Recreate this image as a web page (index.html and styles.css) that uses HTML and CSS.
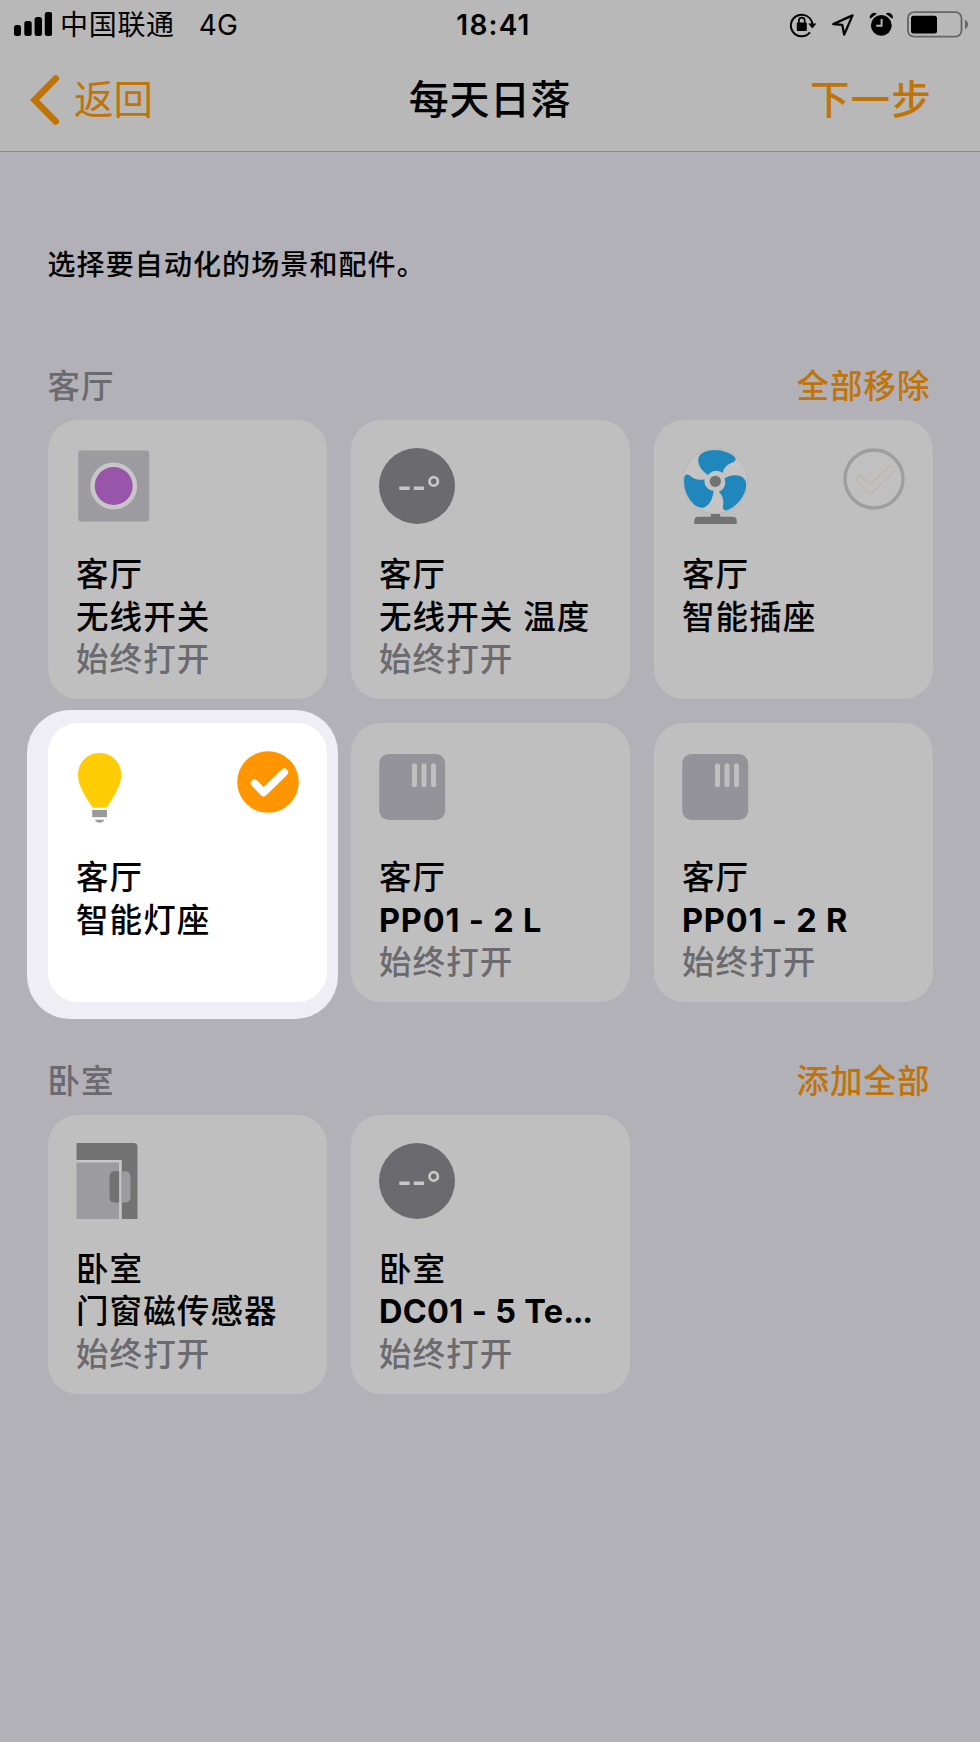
FILE: index.html
```html
<!DOCTYPE html>
<html lang="zh-CN">
<head>
    <meta charset="UTF-8">
    <title>每天日落</title>
    <link rel="stylesheet" href="styles.css">
</head>
<body>
    <!-- shared icons -->
    <svg class="defs" width="0" height="0">
        <symbol id="thermo" viewBox="0 0 76 76">
            <circle cx="38" cy="38" r="38" fill="#89888d"/>
            <path d="M20.3 40.3h10.3M34.8 40.3h10.3" stroke="#fff" stroke-width="3.6"/>
            <circle cx="54.7" cy="33.4" r="4.2" fill="none" stroke="#fff" stroke-width="2.8"/>
        </symbol>
        <symbol id="switch" viewBox="0 0 76 76">
            <rect x=".2" y="3" width="66" height="66" rx="9.5" fill="#bebdc4"/>
            <path d="M35.5 14.8v19M45 14.8v19M54.5 14.8v19" stroke="#f5f5f5" stroke-width="5" stroke-linecap="round"/>
        </symbol>
    </svg>

    <header>
        <div class="status">
            <div class="carrier">
                <svg width="38" height="24" viewBox="0 0 38 24">
                    <rect x="0" y="13" width="7" height="11" rx="2.5"/>
                    <rect x="10.3" y="9" width="7.4" height="15" rx="2.5"/>
                    <rect x="20.6" y="5" width="7.4" height="19" rx="2.5"/>
                    <rect x="30.8" y="0" width="7.4" height="24" rx="2.5"/>
                </svg>
                <span class="operator">中国联通</span>
                <span class="network">4G</span>
            </div>
            <div class="time">18:41</div>
            <svg class="status-icons" width="182" height="32" viewBox="0 0 182 32">
                <!-- rotation lock -->
                <path d="M22 23.4a10.8 10.8 0 1 1 2.4-8.2" fill="none" stroke="#000" stroke-width="2"/>
                <path d="M20.2 14.6h8.2l-4.1 5z"/>
                <rect x="8.8" y="13.6" width="10" height="8.4" rx="1"/>
                <path d="M10.9 14v-2.4a2.9 2.9 0 0 1 5.8 0V14" fill="none" stroke="#000" stroke-width="1.7"/>
                <!-- location -->
                <path d="M45.3 15.1L64.5 6.4l-8.3 19.2-2-9.8z" fill="none" stroke="#000" stroke-width="2.3" stroke-linejoin="round"/>
                <!-- alarm -->
                <circle cx="93.3" cy="16.4" r="10.4"/>
                <path d="M82.4 8.6a4 4 0 0 1 5.3-3.9zM104.2 8.6a4 4 0 0 0-5.3-3.9z" stroke="#000" stroke-width="1.5" stroke-linejoin="round"/>
                <path d="M93.6 10v6.8h-5.4" fill="none" stroke="#ececec" stroke-width="1.9"/>
                <!-- battery -->
                <rect x="119.9" y="3.2" width="53.6" height="24.4" rx="6" fill="none" stroke="#828282" stroke-width="1.8"/>
                <rect x="123" y="6.8" width="26" height="17.6" rx="2.5"/>
                <path d="M177 10.8c4 1.8 4 7.6 0 9.4z" fill="#828282"/>
            </svg>
        </div>
        <nav>
            <a class="back">
                <svg width="30" height="50" viewBox="0 0 30 50"><path d="M25.8 3.5L4.6 25l21.2 21.5" fill="none" stroke="currentColor" stroke-width="6.6" stroke-linecap="round" stroke-linejoin="miter"/></svg>
                <span>返回</span>
            </a>
            <h1>每天日落</h1>
            <a class="next">下一步</a>
        </nav>
    </header>

    <main>
        <p class="hint">选择要自动化的场景和配件。</p>

        <section>
            <div class="room">
                <h2>客厅</h2>
                <a>全部移除</a>
            </div>
            <div class="grid">
                <div class="tile">
                    <svg class="icon" viewBox="0 0 76 76">
                        <rect x="2.2" y="2.5" width="71" height="71" rx="3" fill="#c8c7ce"/>
                        <circle cx="37.7" cy="38" r="23.5" fill="#fff"/>
                        <circle cx="37.7" cy="38" r="19" fill="#c56dd9"/>
                    </svg>
                    <p>客厅</p>
                    <p>无线开关</p>
                    <p class="state">始终打开</p>
                </div>
                <div class="tile">
                    <svg class="icon"><use href="#thermo"/></svg>
                    <p>客厅</p>
                    <p>无线开关 温度</p>
                    <p class="state">始终打开</p>
                </div>
                <div class="tile">
                    <svg class="icon" viewBox="0 0 76 76">
                        <circle cx="33.3" cy="33.3" r="32.5" fill="#fbfbfb" stroke="#e9e9e9"/>
                        <g fill="#29adf2">
                            <path id="blade" d="M26 27C20 23 15.8 17.5 16.2 11C17 5 25 2 33 2C41 2 48 5 52.5 8.7C54.5 10.5 53.5 13 51.5 14C46 16 42 19 40.5 25C36 21.5 30 22 26 27Z"/>
                            <use href="#blade" transform="rotate(120 33.3 33.3)"/>
                            <use href="#blade" transform="rotate(240 33.3 33.3)"/>
                        </g>
                        <circle cx="33.3" cy="33.3" r="9" fill="#fbfbfb"/>
                        <circle cx="33.3" cy="33.3" r="5.6" fill="#939393"/>
                        <path d="M12.3 76v-3.3q0-4 4-4h12.5V66h9.4v2.7h12.5q4 0 4 4V76z" fill="#939393"/>
                    </svg>
                    <svg class="check" viewBox="0 0 62 62">
                        <circle cx="31" cy="31" r="29" fill="#f7f7f7" stroke="#cbcbcb" stroke-width="3.4"/>
                        <g fill="none" stroke-linecap="round" stroke-linejoin="round">
                            <path d="M17.2 31.6l10 9.8L48 21.6" stroke="#f1ddbf" stroke-width="8"/>
                            <path d="M17.2 31.6l10 9.8L48 21.6" stroke="#f7f7f7" stroke-width="6.8"/>
                        </g>
                    </svg>
                    <p>客厅</p>
                    <p>智能插座</p>
                </div>
                <div class="tile spotlight">
                    <svg class="icon" viewBox="0 0 76 76">
                        <path d="M23.6 2C11.1 2 2 11.5 2 24C2 35 9.6 45.5 15.1 54.5Q16.3 56.7 18.4 56.7H28.8Q30.9 56.7 32.1 54.5C37.6 45.5 45.2 35 45.2 24C45.2 11.5 36.1 2 23.6 2Z" fill="#ffcc05"/>
                        <rect x="16.2" y="59" width="14.8" height="7.2" fill="#999"/>
                        <path d="M18.8 68.8h9.6q-1.6 3-4.8 3t-4.8-3z" fill="#999"/>
                    </svg>
                    <svg class="check" viewBox="0 0 62 62">
                        <circle cx="31" cy="31" r="30.8" fill="#ff9500"/>
                        <path d="M17.6 32.3l9 9.2L47.3 21.3" fill="none" stroke="#fff" stroke-width="7.6" stroke-linecap="round" stroke-linejoin="round"/>
                    </svg>
                    <p>客厅</p>
                    <p>智能灯座</p>
                </div>
                <div class="tile">
                    <svg class="icon"><use href="#switch"/></svg>
                    <p>客厅</p>
                    <p class="latin">PP01 - 2 L</p>
                    <p class="state">始终打开</p>
                </div>
                <div class="tile">
                    <svg class="icon"><use href="#switch"/></svg>
                    <p>客厅</p>
                    <p class="latin">PP01 - 2 R</p>
                    <p class="state">始终打开</p>
                </div>
            </div>
        </section>

        <section>
            <div class="room">
                <h2>卧室</h2>
                <a>添加全部</a>
            </div>
            <div class="grid">
                <div class="tile">
                    <svg class="icon" viewBox="0 0 76 76">
                        <path d="M.5 0h57q4 0 4 4v72h-16V17H.5z" fill="#939393"/>
                        <path d="M.5 18.2h43.8V76" fill="none" stroke="#fff" stroke-width="2.5"/>
                        <path d="M.5 19.4h42.6V76H.5z" fill="#c8c7ce"/>
                        <path d="M43.1 28.3h-4.6a5 5 0 0 0-5 5v21.3a5 5 0 0 0 5 5h4.6z" fill="#939393"/>
                        <path d="M45.5 28.3h4a5 5 0 0 1 5 5v21.3a5 5 0 0 1-5 5h-4z" fill="#c8c7ce"/>
                    </svg>
                    <p>卧室</p>
                    <p>门窗磁传感器</p>
                    <p class="state">始终打开</p>
                </div>
                <div class="tile">
                    <svg class="icon"><use href="#thermo"/></svg>
                    <p>卧室</p>
                    <p class="latin tight">DC01 - 5 Te<span class="dots">...</span></p>
                    <p class="state">始终打开</p>
                </div>
            </div>
        </section>
    </main>
</body>
</html>
```
FILE: styles.css
```css
* {
    box-sizing: border-box;
    margin: 0;
    padding: 0;
}
body {
    width: 980px;
    height: 1742px;
    overflow: hidden;
    background-color: #e4e3eb;
    color: #000;
    font-family: Inter, "Noto Sans CJK SC", sans-serif;
}
.defs {
    position: absolute;
}
header {
    height: 152px;
    background-color: #ececec;
    border-bottom: 1px solid #acacac;
}
.status {
    display: grid;
    grid-template-columns: 1fr auto 1fr;
    align-items: center;
    height: 50px;
    padding: 0 10px 0 14px;
    font-size: 28px;
    line-height: 50px;
}
.carrier {
    display: flex;
    align-items: center;
}
.carrier svg {
    margin-top: -3px;
}
.operator {
    margin-left: 8px;
    letter-spacing: 0.7px;
}
.network {
    margin-left: 24px;
}
.time {
    margin-left: 3px;
    font-weight: 600;
    letter-spacing: 1.2px;
}
.status-icons {
    justify-self: end;
}
nav {
    display: grid;
    grid-template-columns: 1fr auto 1fr;
    align-items: center;
    height: 93px;
    padding: 0 30px;
    font-size: 39.5px;
}
nav a, .room a {
    color: #f79509;
}
nav h1 {
    font-size: 40px;
    font-weight: 500;
    letter-spacing: 0.6px;
}
.back {
    display: flex;
    align-items: center;
    gap: 14px;
}
.back svg {
    margin-top: 6px;
}
.next {
    justify-self: end;
    margin-right: 18px;
    font-weight: 500;
    letter-spacing: 1.2px;
}
main {
    padding: 93px 47.5px 0;
}
.hint {
    height: 40px;
    margin-bottom: 68px;
    font-size: 28px;
    font-weight: 500;
    line-height: 40px;
    letter-spacing: 1.1px;
}
section {
    margin-bottom: 45.5px;
}
.room {
    display: flex;
    justify-content: space-between;
    height: 67px;
    font-size: 32.5px;
    font-weight: 500;
    line-height: 68px;
    letter-spacing: 1px;
}
.room h2 {
    font-size: inherit;
    font-weight: inherit;
    color: #89888d;
}
.room a {
    margin-right: 2px;
}
.grid {
    display: grid;
    grid-template-columns: repeat(3, 279px);
    grid-auto-rows: 279px;
    gap: 24px;
}
.tile {
    position: relative;
    padding: 28px;
    border-radius: 30px;
    background-color: #f5f5f5;
}
.icon {
    display: block;
    width: 76px;
    height: 76px;
    margin-bottom: 30px;
}
.check {
    position: absolute;
    top: 28px;
    right: 28px;
    width: 62px;
    height: 62px;
}
.tile p {
    height: 42.7px;
    padding-left: 0.5px;
    font-size: 32.5px;
    font-weight: 500;
    line-height: 42.7px;
    letter-spacing: 1.1px;
    white-space: nowrap;
}
.tile .latin {
    font-weight: 700;
    letter-spacing: 0.8px;
}
.tile .tight {
    letter-spacing: 0.3px;
}
.tile .dots {
    letter-spacing: -1.4px;
}
.tile .state {
    color: #89888d;
}

/* highlighted tile, everything around it is dimmed */
.spotlight {
    z-index: 1;
    background: none;
}
.spotlight::before, .spotlight::after {
    content: "";
    position: absolute;
    z-index: -1;
}
.spotlight::before {
    inset: -13px -11px -17px -20.5px;
    border-radius: 43px;
    background-color: #efeef4;
    box-shadow: 0 0 0 2000px rgba(0, 0, 0, 0.22);
}
.spotlight::after {
    inset: 0;
    border-radius: 30px;
    background-color: #fff;
}
```
